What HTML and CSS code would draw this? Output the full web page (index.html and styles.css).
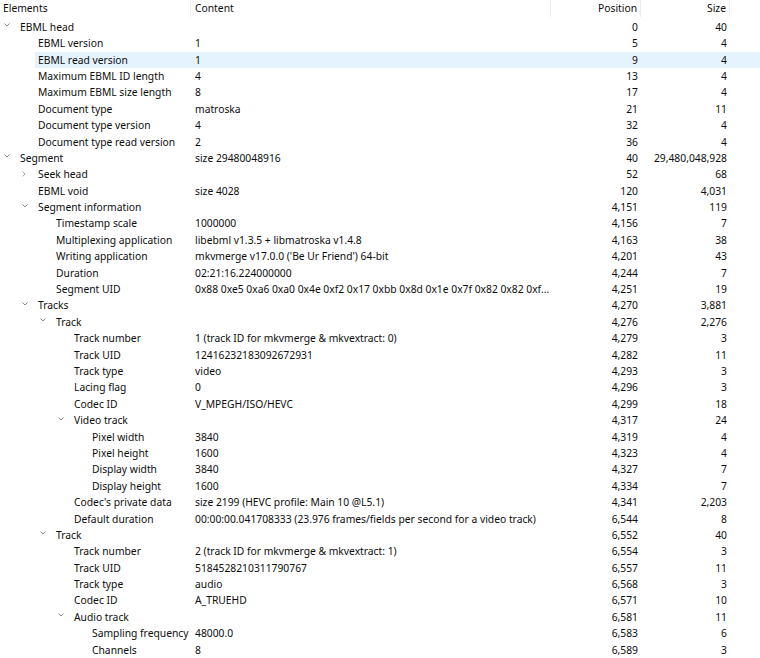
FILE: index.html
```html
<!DOCTYPE html>
<html>
<head>
<meta charset="utf-8">
<link rel="stylesheet" href="styles.css">
</head>
<body>
<div class="tree">
  <div class="cols head">
    <div class="h">Elements</div>
    <div class="h">Content</div>
    <div class="h r">Position</div>
    <div class="h r">Size</div>
    <div></div>
  </div>
  <div class="rows">
    <div class="cols row"><div class="el l0"><span class="tw open"><svg viewBox="0 0 6 4"><path d="M0.5 0.5 L3 3 L5.5 0.5"/></svg></span>EBML head</div><div class="ct"></div><div class="n">0</div><div class="n">40</div><div></div></div>
    <div class="cols row"><div class="el l1">EBML version</div><div class="ct">1</div><div class="n">5</div><div class="n">4</div><div></div></div>
    <div class="cols row hover"><div class="el l1">EBML read version</div><div class="ct">1</div><div class="n">9</div><div class="n">4</div><div></div></div>
    <div class="cols row"><div class="el l1">Maximum EBML ID length</div><div class="ct">4</div><div class="n">13</div><div class="n">4</div><div></div></div>
    <div class="cols row"><div class="el l1">Maximum EBML size length</div><div class="ct">8</div><div class="n">17</div><div class="n">4</div><div></div></div>
    <div class="cols row"><div class="el l1">Document type</div><div class="ct">matroska</div><div class="n">21</div><div class="n">11</div><div></div></div>
    <div class="cols row"><div class="el l1">Document type version</div><div class="ct">4</div><div class="n">32</div><div class="n">4</div><div></div></div>
    <div class="cols row"><div class="el l1">Document type read version</div><div class="ct">2</div><div class="n">36</div><div class="n">4</div><div></div></div>
    <div class="cols row"><div class="el l0"><span class="tw open"><svg viewBox="0 0 6 4"><path d="M0.5 0.5 L3 3 L5.5 0.5"/></svg></span>Segment</div><div class="ct">size 29480048916</div><div class="n">40</div><div class="n">29,480,048,928</div><div></div></div>
    <div class="cols row"><div class="el l1"><span class="tw shut"><svg viewBox="0 0 4 6"><path d="M0.5 0.5 L3 3 L0.5 5.5"/></svg></span>Seek head</div><div class="ct"></div><div class="n">52</div><div class="n">68</div><div></div></div>
    <div class="cols row"><div class="el l1">EBML void</div><div class="ct">size 4028</div><div class="n">120</div><div class="n">4,031</div><div></div></div>
    <div class="cols row"><div class="el l1"><span class="tw open"><svg viewBox="0 0 6 4"><path d="M0.5 0.5 L3 3 L5.5 0.5"/></svg></span>Segment information</div><div class="ct"></div><div class="n">4,151</div><div class="n">119</div><div></div></div>
    <div class="cols row"><div class="el l2">Timestamp scale</div><div class="ct">1000000</div><div class="n">4,156</div><div class="n">7</div><div></div></div>
    <div class="cols row"><div class="el l2">Multiplexing application</div><div class="ct">libebml v1.3.5 + libmatroska v1.4.8</div><div class="n">4,163</div><div class="n">38</div><div></div></div>
    <div class="cols row"><div class="el l2">Writing application</div><div class="ct">mkvmerge v17.0.0 ('Be Ur Friend') 64-bit</div><div class="n">4,201</div><div class="n">43</div><div></div></div>
    <div class="cols row"><div class="el l2">Duration</div><div class="ct">02:21:16.224000000</div><div class="n">4,244</div><div class="n">7</div><div></div></div>
    <div class="cols row"><div class="el l2">Segment UID</div><div class="ct">0x88 0xe5 0xa6 0xa0 0x4e 0xf2 0x17 0xbb 0x8d 0x1e 0x7f 0x82 0x82 0xf...</div><div class="n">4,251</div><div class="n">19</div><div></div></div>
    <div class="cols row"><div class="el l1"><span class="tw open"><svg viewBox="0 0 6 4"><path d="M0.5 0.5 L3 3 L5.5 0.5"/></svg></span>Tracks</div><div class="ct"></div><div class="n">4,270</div><div class="n">3,881</div><div></div></div>
    <div class="cols row"><div class="el l2"><span class="tw open"><svg viewBox="0 0 6 4"><path d="M0.5 0.5 L3 3 L5.5 0.5"/></svg></span>Track</div><div class="ct"></div><div class="n">4,276</div><div class="n">2,276</div><div></div></div>
    <div class="cols row"><div class="el l3">Track number</div><div class="ct">1 (track ID for mkvmerge &amp; mkvextract: 0)</div><div class="n">4,279</div><div class="n">3</div><div></div></div>
    <div class="cols row"><div class="el l3">Track UID</div><div class="ct">12416232183092672931</div><div class="n">4,282</div><div class="n">11</div><div></div></div>
    <div class="cols row"><div class="el l3">Track type</div><div class="ct">video</div><div class="n">4,293</div><div class="n">3</div><div></div></div>
    <div class="cols row"><div class="el l3">Lacing flag</div><div class="ct">0</div><div class="n">4,296</div><div class="n">3</div><div></div></div>
    <div class="cols row"><div class="el l3">Codec ID</div><div class="ct">V_MPEGH/ISO/HEVC</div><div class="n">4,299</div><div class="n">18</div><div></div></div>
    <div class="cols row"><div class="el l3"><span class="tw open"><svg viewBox="0 0 6 4"><path d="M0.5 0.5 L3 3 L5.5 0.5"/></svg></span>Video track</div><div class="ct"></div><div class="n">4,317</div><div class="n">24</div><div></div></div>
    <div class="cols row"><div class="el l4">Pixel width</div><div class="ct">3840</div><div class="n">4,319</div><div class="n">4</div><div></div></div>
    <div class="cols row"><div class="el l4">Pixel height</div><div class="ct">1600</div><div class="n">4,323</div><div class="n">4</div><div></div></div>
    <div class="cols row"><div class="el l4">Display width</div><div class="ct">3840</div><div class="n">4,327</div><div class="n">7</div><div></div></div>
    <div class="cols row"><div class="el l4">Display height</div><div class="ct">1600</div><div class="n">4,334</div><div class="n">7</div><div></div></div>
    <div class="cols row"><div class="el l3">Codec's private data</div><div class="ct">size 2199 (HEVC profile: Main 10 @L5.1)</div><div class="n">4,341</div><div class="n">2,203</div><div></div></div>
    <div class="cols row"><div class="el l3">Default duration</div><div class="ct">00:00:00.041708333 (23.976 frames/fields per second for a video track)</div><div class="n">6,544</div><div class="n">8</div><div></div></div>
    <div class="cols row"><div class="el l2"><span class="tw open"><svg viewBox="0 0 6 4"><path d="M0.5 0.5 L3 3 L5.5 0.5"/></svg></span>Track</div><div class="ct"></div><div class="n">6,552</div><div class="n">40</div><div></div></div>
    <div class="cols row"><div class="el l3">Track number</div><div class="ct">2 (track ID for mkvmerge &amp; mkvextract: 1)</div><div class="n">6,554</div><div class="n">3</div><div></div></div>
    <div class="cols row"><div class="el l3">Track UID</div><div class="ct">5184528210311790767</div><div class="n">6,557</div><div class="n">11</div><div></div></div>
    <div class="cols row"><div class="el l3">Track type</div><div class="ct">audio</div><div class="n">6,568</div><div class="n">3</div><div></div></div>
    <div class="cols row"><div class="el l3">Codec ID</div><div class="ct">A_TRUEHD</div><div class="n">6,571</div><div class="n">10</div><div></div></div>
    <div class="cols row"><div class="el l3"><span class="tw open"><svg viewBox="0 0 6 4"><path d="M0.5 0.5 L3 3 L5.5 0.5"/></svg></span>Audio track</div><div class="ct"></div><div class="n">6,581</div><div class="n">11</div><div></div></div>
    <div class="cols row"><div class="el l4">Sampling frequency</div><div class="ct">48000.0</div><div class="n">6,583</div><div class="n">6</div><div></div></div>
    <div class="cols row"><div class="el l4">Channels</div><div class="ct">8</div><div class="n">6,589</div><div class="n">3</div><div></div></div>
  </div>
</div>
</body>
</html>
```
FILE: styles.css
```css
html, body {
  margin: 0;
  padding: 0;
  background: #ffffff;
}
body {
  width: 760px;
  height: 658px;
  overflow: hidden;
  font-family: "Noto Sans", "Open Sans", sans-serif;
  font-size: 10.3px;
  color: #0d0d0d;
}
.cols {
  display: grid;
  grid-template-columns: 191px 360px 90px 89px 1fr;
}
.head {
  height: 18.8px;
}
.head .h {
  height: 17px;
  line-height: 16px;
  padding: 0 3px;
  border-right: 1px solid #ececec;
  white-space: nowrap;
  overflow: hidden;
}
.head .h + .h {
  padding-left: 4px;
}
.head .r {
  text-align: right;
  padding-right: 3px;
}
.row {
  height: 16.4px;
  line-height: 16.4px;
  white-space: nowrap;
}
.row > div {
  overflow: hidden;
}
.row.hover {
  background: linear-gradient(to right, transparent 35px, #e5f3ff 35px);
}
.el {
  overflow: visible !important;
}
.l0 { padding-left: 20px; }
.l1 { padding-left: 38px; }
.l2 { padding-left: 56px; }
.l3 { padding-left: 74px; }
.l4 { padding-left: 92px; }
.ct {
  padding-left: 4px;
}
.n {
  text-align: right;
  padding-right: 3px;
}
.tw {
  display: inline-block;
  width: 17px;
  margin-left: -17px;
  vertical-align: top;
  height: 16.4px;
}
.tw svg {
  fill: none;
  stroke-width: 1;
  display: block;
}
.tw.open svg {
  width: 6px;
  height: 4px;
  margin: 4.5px 0 0 1px;
  stroke: #8a8a8a;
}
.tw.shut svg {
  width: 4px;
  height: 6px;
  margin: 5px 0 0 1px;
  stroke: #a8a8a8;
}
```
